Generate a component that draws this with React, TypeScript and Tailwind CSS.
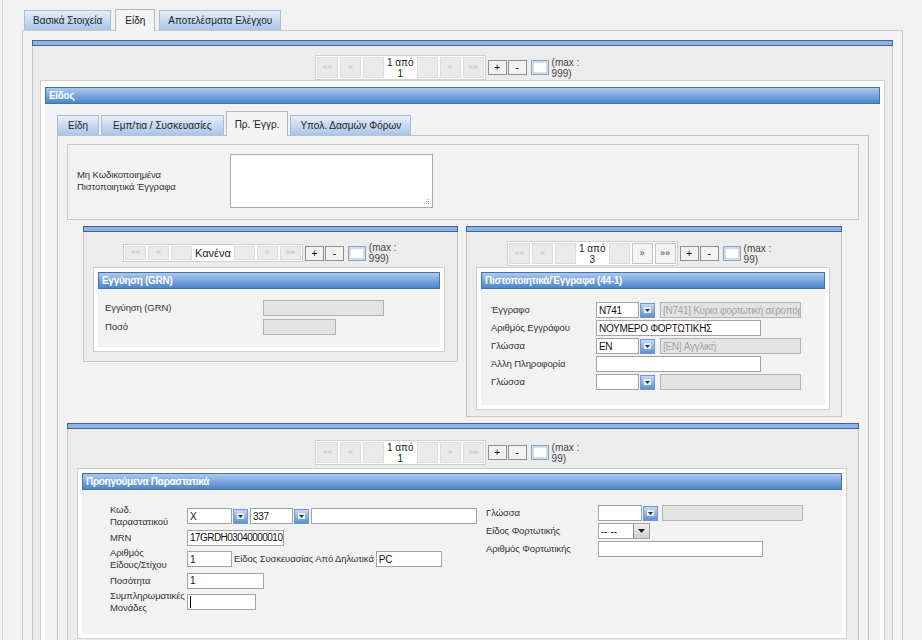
import React from 'react';

const LBL = 'text-[9.5px] tracking-[-0.1px] text-[#333]';

function BlueBar() {
  return <div className="h-[6px] border border-[#3f6494] bg-[#8db4e5]" />;
}

function Header({ title }: { title: string }) {
  return (
    <div className="flex h-[17px] items-center border border-[#4571a6] bg-linear-to-b from-[#aac9ef] to-[#4c85ca] px-[3px] text-[10px] font-bold tracking-[-0.3px] text-white">
      {title}
    </div>
  );
}

interface PanelProps {
  title: string;
  className?: string;
  bodyClass?: string;
  children?: React.ReactNode;
}

// white framed panel with blue title bar
function Panel({ title, className = '', bodyClass = '', children }: PanelProps) {
  return (
    <div className={`border border-[#d0d0d0] bg-white p-[4px] ${className}`}>
      <Header title={title} />
      <div className={`bg-[#f2f2f2] ${bodyClass}`}>{children}</div>
    </div>
  );
}

function Section({ className = '', bodyClass = '', children }: { className?: string; bodyClass?: string; children?: React.ReactNode }) {
  return (
    <div className={className}>
      <BlueBar />
      <div className={`border-x border-b border-[#c6c6c6] bg-[#ececec] ${bodyClass}`}>{children}</div>
    </div>
  );
}

function NavBtn({ g, on }: { g: string; on?: boolean }) {
  return (
    <div
      className={`flex w-[21px] items-center justify-center border text-[9px] ${
        on ? 'border-[#c4c4c4] bg-[#f4f4f4] text-[#333]' : 'border-[#dcdcdc] bg-[#eaeaea] text-[#b9b9b9]'
      }`}
    >
      {g}
    </div>
  );
}

interface PagerProps {
  label: React.ReactNode;
  max: string;
  tall?: boolean;
  next?: boolean;
  className?: string;
}

function Pager({ label, max, tall, next, className = '' }: PagerProps) {
  return (
    <div className={`flex items-center ${className}`}>
      <div className={`flex ${tall ? 'h-[25px]' : 'h-[18px]'} gap-[2px] border border-[#cfcfcf] bg-white p-px`}>
        <NavBtn g="««" />
        <NavBtn g="«" />
        <NavBtn g="" />
        <div className="flex items-center justify-center px-[1px] text-center leading-[11px] text-[#222]">{label}</div>
        <NavBtn g="" />
        <NavBtn g="»" on={next} />
        <NavBtn g="»»" on={next} />
      </div>
      <div className="ml-[2px] flex gap-[1px]">
        <div className="h-[15px] w-[19px] border border-[#8e8e8e] bg-[#f2f2f2] text-center text-[10px] leading-[13px]">+</div>
        <div className="h-[15px] w-[19px] border border-[#8e8e8e] bg-[#f2f2f2] text-center text-[10px] leading-[13px]">-</div>
      </div>
      <div className="ml-[4px] h-[15px] w-[18px] border border-[#8ea3c0] bg-white shadow-[inset_0_0_0_2px_#d0dcea]" />
      <div className="ml-[3px] text-[10px] leading-[11px] text-[#444]">
        (max :
        <br />
        {max})
      </div>
    </div>
  );
}

interface InputProps {
  w: string;
  value?: string;
  disabled?: boolean;
  caret?: boolean;
  tight?: boolean;
}

function Input({ w, value = '', disabled, caret, tight }: InputProps) {
  return (
    <div
      className={`flex h-[16px] ${w} items-center overflow-hidden whitespace-nowrap border px-[2px] ${
        tight ? 'tracking-[-0.55px]' : 'tracking-[-0.3px]'
      } ${disabled ? 'border-[#b3b3b3] bg-[#e3e3e3] text-[#a3a3a3]' : 'border-[#a3a3a3] bg-white text-[#111]'}`}
    >
      {caret && <div className="h-[12px] w-[1px] bg-black" />}
      {value}
    </div>
  );
}

function Combo({ w, value = '' }: { w: string; value?: string }) {
  return (
    <div className="flex items-center">
      <Input w={w} value={value} />
      <div className="ml-[1px] flex h-[15px] w-[15px] items-center justify-center border border-[#6f98cc] bg-linear-to-b from-[#c6daf2] to-[#5d8fd1]">
        <div className="flex h-[6px] w-[7px] items-center justify-center bg-[#e9eef6]">
          <svg width="5" height="3" viewBox="0 0 5 3">
            <path d="M0 0h5L2.5 3z" fill="#203247" />
          </svg>
        </div>
      </div>
    </div>
  );
}

function NativeSelect({ value }: { value: string }) {
  return (
    <div className="flex h-[16px] w-[52px] border border-[#a3a3a3] bg-white">
      <div className="flex flex-1 items-center px-[2px] text-[#111]">{value}</div>
      <div className="flex w-[16px] items-center justify-center border-l border-[#8a8a8a] bg-linear-to-b from-[#f0f0f0] to-[#cfcfcf]">
        <svg width="7" height="4" viewBox="0 0 7 4">
          <path d="M0 0h7L3.5 4z" fill="#222" />
        </svg>
      </div>
    </div>
  );
}

function Row({ label, lw, h = 'h-[18px]', children }: { label: React.ReactNode; lw: string; h?: string; children?: React.ReactNode }) {
  return (
    <div className={`flex ${h} items-center`}>
      <div className={`${lw} shrink-0 whitespace-nowrap leading-[12px] ${LBL}`}>{label}</div>
      <div className="flex items-center">{children}</div>
    </div>
  );
}

function Tab({ label, active, tall, px = 'px-[8px]' }: { label: string; active?: boolean; tall?: string; px?: string }) {
  if (active) {
    return (
      <div className={`relative z-10 -mb-px flex ${tall} items-center border border-b-0 border-[#b9b9b9] bg-[#f4f4f4] ${px} text-[#222]`}>
        {label}
      </div>
    );
  }
  return (
    <div className={`flex h-[20px] items-center border border-b-0 border-[#a9bdd8] bg-linear-to-b from-[#e6eef8] to-[#a8c5ea] ${px} text-[#222]`}>
      {label}
    </div>
  );
}

export default function App() {
  return (
    <div className="h-[640px] w-[922px] overflow-hidden bg-[#f2f2f2] font-['Liberation_Sans',Arial,sans-serif] text-[10px]">
      <div className="ml-[2px] h-full border-l border-[#d6d6d6] pl-[19px] pt-[9px]">
        {/* top tabs */}
        <div className="flex items-end gap-[4px] pl-[2px]">
          <Tab label="Βασικά Στοιχεία" />
          <Tab label="Είδη" active tall="h-[22px]" px="px-[9px]" />
          <Tab label="Αποτελέσματα Ελέγχου" />
        </div>

        <div className="h-[620px] w-[881px] border border-[#c9c9c9] bg-[#f4f4f4] px-[9px] pt-[9px]">
          <Section bodyClass="px-[7px] pt-[9px] h-[600px]">
            <Pager label={<>1 από<br />1</>} max="999" tall className="pl-[275px]" />

            <Panel title="Είδος" className="pt-[6px]" bodyClass="pl-[12px] pr-[11px] pt-[7px] h-[560px]">
              {/* inner tabs */}
              <div className="flex items-end gap-[2px]">
                <Tab label="Είδη" px="px-[10px]" />
                <Tab label="Εμπ/τια / Συσκευασίες" px="px-[11px]" />
                <Tab label="Πρ. Έγγρ." active tall="h-[25px]" px="px-[8px]" />
                <Tab label="Υπολ. Δασμών Φόρων" px="px-[9px]" />
              </div>

              <div className="h-[540px] border border-[#c2c2c2] bg-[#f2f2f2] px-[9px] pt-[8px]">
                {/* uncoded certificates */}
                <div className="flex items-center border border-[#c8c8c8] pb-[11px] pl-[9px] pt-[9px]">
                  <div className={`w-[153px] leading-[12px] ${LBL}`}>
                    Μη Κωδικοποιημένα
                    <br />
                    Πιστοποιητικά Έγγραφα
                  </div>
                  <div className="relative h-[54px] w-[203px] border border-[#a8a8a8] bg-white">
                    <svg className="absolute bottom-[2px] right-[2px]" width="6" height="6" viewBox="0 0 6 6">
                      <rect x="4" y="0" width="1" height="1" fill="#999" />
                      <rect x="2" y="2" width="1" height="1" fill="#999" />
                      <rect x="4" y="2" width="1" height="1" fill="#999" />
                      <rect x="0" y="4" width="1" height="1" fill="#999" />
                      <rect x="2" y="4" width="1" height="1" fill="#999" />
                      <rect x="4" y="4" width="1" height="1" fill="#999" />
                    </svg>
                  </div>
                </div>

                <div className="mt-[6px] flex items-start gap-[8px] px-[16px]">
                  {/* GRN */}
                  <Section className="w-[375px]" bodyClass="pb-[9px] pl-[9px] pr-[12px] pt-[10px]">
                    <Pager label={<span className="text-[11px]">Κανένα</span>} max="999" className="pl-[30px]" />
                    <Panel title="Εγγύηση (GRN)" className="mt-[3px]" bodyClass="pb-[11px] pl-[7px] pt-[9px]">
                      <Row label="Εγγύηση (GRN)" lw="w-[158px]" h="h-[19px]">
                        <Input w="w-[121px]" disabled />
                      </Row>
                      <Row label="Ποσό" lw="w-[158px]" h="h-[19px]">
                        <Input w="w-[73px]" disabled />
                      </Row>
                    </Panel>
                  </Section>

                  {/* certificates / documents */}
                  <Section className="w-[376px]" bodyClass="pb-[6px] pl-[9px] pr-[11px] pt-[9px]">
                    <Pager label={<>1 από<br />3</>} max="99" tall next className="pl-[31px]" />
                    <Panel title="Πιστοποιητικά/Έγγραφα (44-1)" className="mt-[1px]" bodyClass="pb-[14px] pl-[10px] pt-[12px]">
                      <Row label="Έγγραφο" lw="w-[105px]">
                        <Combo w="w-[43px]" value="N741" />
                        <div className="ml-[5px]">
                          <Input w="w-[141px]" value="[N741] Κύρια φορτωτική αεροπορ" disabled />
                        </div>
                      </Row>
                      <Row label="Αριθμός Εγγράφου" lw="w-[105px]">
                        <Input w="w-[165px]" value="ΝΟΥΜΕΡΟ ΦΟΡΤΩΤΙΚΗΣ" />
                      </Row>
                      <Row label="Γλώσσα" lw="w-[105px]">
                        <Combo w="w-[43px]" value="EN" />
                        <div className="ml-[5px]">
                          <Input w="w-[141px]" value="[EN] Αγγλική" disabled />
                        </div>
                      </Row>
                      <Row label="Άλλη Πληροφορία" lw="w-[105px]">
                        <Input w="w-[165px]" />
                      </Row>
                      <Row label="Γλώσσα" lw="w-[105px]">
                        <Combo w="w-[43px]" />
                        <div className="ml-[5px]">
                          <Input w="w-[141px]" disabled />
                        </div>
                      </Row>
                    </Panel>
                  </Section>
                </div>

                {/* previous documents */}
                <Section className="mt-[6px]" bodyClass="pl-[9px] pr-[11px] pt-[11px] h-[300px]">
                  <Pager label={<>1 από<br />1</>} max="99" tall className="pl-[238px]" />
                  <Panel title="Προηγούμενα Παραστατικά" className="mt-[3px]" bodyClass="flex pl-[28px] pt-[14px] pb-[20px]">
                    <div className="w-[376px]">
                      <Row label={<>Κωδ.<br />Παραστατικού</>} lw="w-[77px]" h="h-[24px]">
                        <Combo w="w-[45px]" value="X" />
                        <div className="ml-[2px]">
                          <Combo w="w-[43px]" value="337" />
                        </div>
                        <div className="ml-[2px]">
                          <Input w="w-[166px]" />
                        </div>
                      </Row>
                      <Row label="MRN" lw="w-[77px]" h="h-[19px]">
                        <Input w="w-[97px]" value="17GRDH03040000010" tight />
                      </Row>
                      <Row label={<>Αριθμός<br />Είδους/Στίχου</>} lw="w-[77px]" h="h-[24px]">
                        <Input w="w-[45px]" value="1" />
                        <span className={`mx-[2px] whitespace-nowrap ${LBL}`}>Είδος Συσκευασίας Από Δηλωτικά</span>
                        <Input w="w-[66px]" value="PC" />
                      </Row>
                      <Row label="Ποσότητα" lw="w-[77px]" h="h-[19px]">
                        <Input w="w-[77px]" value="1" />
                      </Row>
                      <Row label={<>Συμπληρωματικές<br />Μονάδες</>} lw="w-[77px]" h="h-[24px]">
                        <Input w="w-[69px]" caret />
                      </Row>
                    </div>
                    <div>
                      <Row label="Γλώσσα" lw="w-[112px]">
                        <Combo w="w-[44px]" />
                        <div className="ml-[4px]">
                          <Input w="w-[141px]" disabled />
                        </div>
                      </Row>
                      <Row label="Είδος Φορτωτικής" lw="w-[112px]">
                        <NativeSelect value="-- --" />
                      </Row>
                      <Row label="Αριθμός Φορτωτικής" lw="w-[112px]">
                        <Input w="w-[165px]" />
                      </Row>
                    </div>
                  </Panel>
                </Section>
              </div>
            </Panel>
          </Section>
        </div>
      </div>
    </div>
  );
}
